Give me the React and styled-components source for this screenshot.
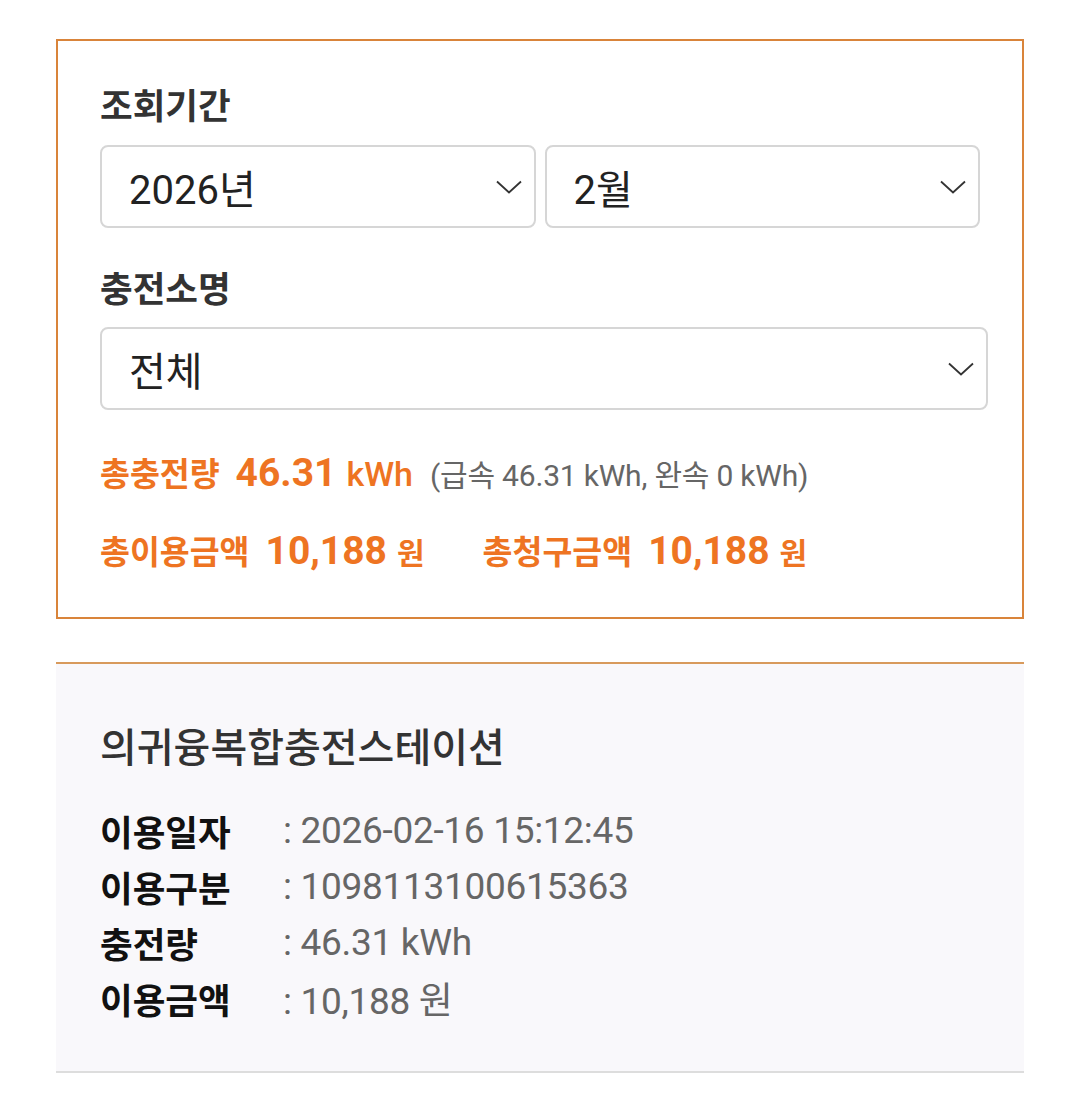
import { createGlobalStyle, styled } from "styled-components";

const GlobalStyle = createGlobalStyle`
  html, body {
    margin: 0;
    background: #ffffff;
  }
  body {
    font-family: Roboto, "Noto Sans CJK KR", sans-serif;
  }
`;

const ORANGE = "#ee7422";

const Page = styled.div`
  padding: 39px 56px 0 56px;
  width: 968px;
`;

/* Search filter box */
const FilterBox = styled.section`
  border: 2px solid #d9843a;
  padding: 40px 34px 42px 42px;
  display: flex;
  flex-direction: column;
`;

const Label = styled.div`
  font-family: "Noto Sans CJK KR", sans-serif;
  font-size: 35.5px;
  font-weight: 700;
  line-height: 46px;
  color: #333;
  margin-top: ${(p) => p.$top || 0}px;
`;

const SelectRow = styled.div`
  display: grid;
  grid-template-columns: 1fr 1fr;
  gap: 9px;
  margin-top: 18px;
  margin-right: 8px;
`;

const Select = styled.div`
  height: 83px;
  box-sizing: border-box;
  border: 2px solid #d6d6d6;
  border-radius: 8px;
  display: flex;
  align-items: center;
  justify-content: space-between;
  padding: 0 12px 0 27px;
  font-size: 40px;
  color: #222;
  margin-top: ${(p) => p.$top || 0}px;
  background: #fff;
`;

const Chevron = () => (
  <svg width="26" height="14" viewBox="0 0 26 14" fill="none">
    <path d="M1 1.5L13 12.5L25 1.5" stroke="#333" strokeWidth="1.8" />
  </svg>
);

const SummaryRow = styled.div`
  display: flex;
  align-items: baseline;
  gap: ${(p) => p.$gap || 0}px;
  margin-top: ${(p) => p.$top || 0}px;
  height: 50px;
  line-height: 50px;
`;

const Group = styled.div`
  display: flex;
  align-items: baseline;
`;

const SumLabel = styled.span`
  font-family: "Noto Sans CJK KR", sans-serif;
  font-size: 32.5px;
  font-weight: 700;
  color: ${ORANGE};
  margin-right: 16px;
`;

const SumValue = styled.span`
  font-size: 39px;
  font-weight: 700;
  color: ${ORANGE};
  margin-right: 10px;
`;

const SumUnit = styled.span`
  font-family: Roboto, "Noto Sans CJK KR", sans-serif;
  font-size: ${(p) => p.$size || 34}px;
  font-weight: ${(p) => p.$weight || 500};
  color: ${ORANGE};
`;

const SumNote = styled.span`
  font-size: 30px;
  color: #666;
  margin-left: 17px;
  letter-spacing: -0.2px;
`;

/* History card */
const Card = styled.section`
  margin-top: 43px;
  border-top: 2px solid #d89a5c;
  border-bottom: 2px solid #dddddd;
  background: #f9f8fb;
  padding: 56px 44px 45px 44px;
`;

const CardTitle = styled.h2`
  margin: 0;
  font-family: "Noto Sans CJK KR", sans-serif;
  font-size: 40px;
  font-weight: 500;
  line-height: 50px;
  color: #333;
`;

const InfoList = styled.dl`
  margin: 32px 0 0 0;
  display: grid;
  grid-template-columns: 183px 1fr;
  grid-auto-rows: 56px;
  align-items: center;
`;

const InfoLabel = styled.dt`
  font-family: "Noto Sans CJK KR", sans-serif;
  font-size: 35.5px;
  font-weight: 700;
  color: #111;
`;

const InfoValue = styled.dd`
  margin: 0;
  font-size: 37px;
  color: #666;
  letter-spacing: -0.3px;
`;

const rows = [
  ["이용일자", ": 2026-02-16 15:12:45"],
  ["이용구분", ": 1098113100615363"],
  ["충전량", ": 46.31 kWh"],
  ["이용금액", ": 10,188 원"],
];

const App = () => {
  return (
    <Page>
      <GlobalStyle />
      <FilterBox>
        <Label>조회기간</Label>
        <SelectRow>
          <Select>
            <span>2026년</span>
            <Chevron />
          </Select>
          <Select>
            <span>2월</span>
            <Chevron />
          </Select>
        </SelectRow>
        <Label $top={36}>충전소명</Label>
        <Select $top={17}>
          <span>전체</span>
          <Chevron />
        </Select>
        <SummaryRow $top={37}>
          <SumLabel>총충전량</SumLabel>
          <SumValue>46.31</SumValue>
          <SumUnit>kWh</SumUnit>
          <SumNote>(급속 46.31 kWh, 완속 0 kWh)</SumNote>
        </SummaryRow>
        <SummaryRow $top={28} $gap={58}>
          <Group>
            <SumLabel>총이용금액</SumLabel>
            <SumValue>10,188</SumValue>
            <SumUnit $size={30} $weight={700}>원</SumUnit>
          </Group>
          <Group>
            <SumLabel>총청구금액</SumLabel>
            <SumValue>10,188</SumValue>
            <SumUnit $size={30} $weight={700}>원</SumUnit>
          </Group>
        </SummaryRow>
      </FilterBox>
      <Card>
        <CardTitle>의귀융복합충전스테이션</CardTitle>
        <InfoList>
          {rows.map(([label, value]) => (
            <>
              <InfoLabel key={label}>{label}</InfoLabel>
              <InfoValue key={label + "v"}>{value}</InfoValue>
            </>
          ))}
        </InfoList>
      </Card>
    </Page>
  );
};

export default App;
